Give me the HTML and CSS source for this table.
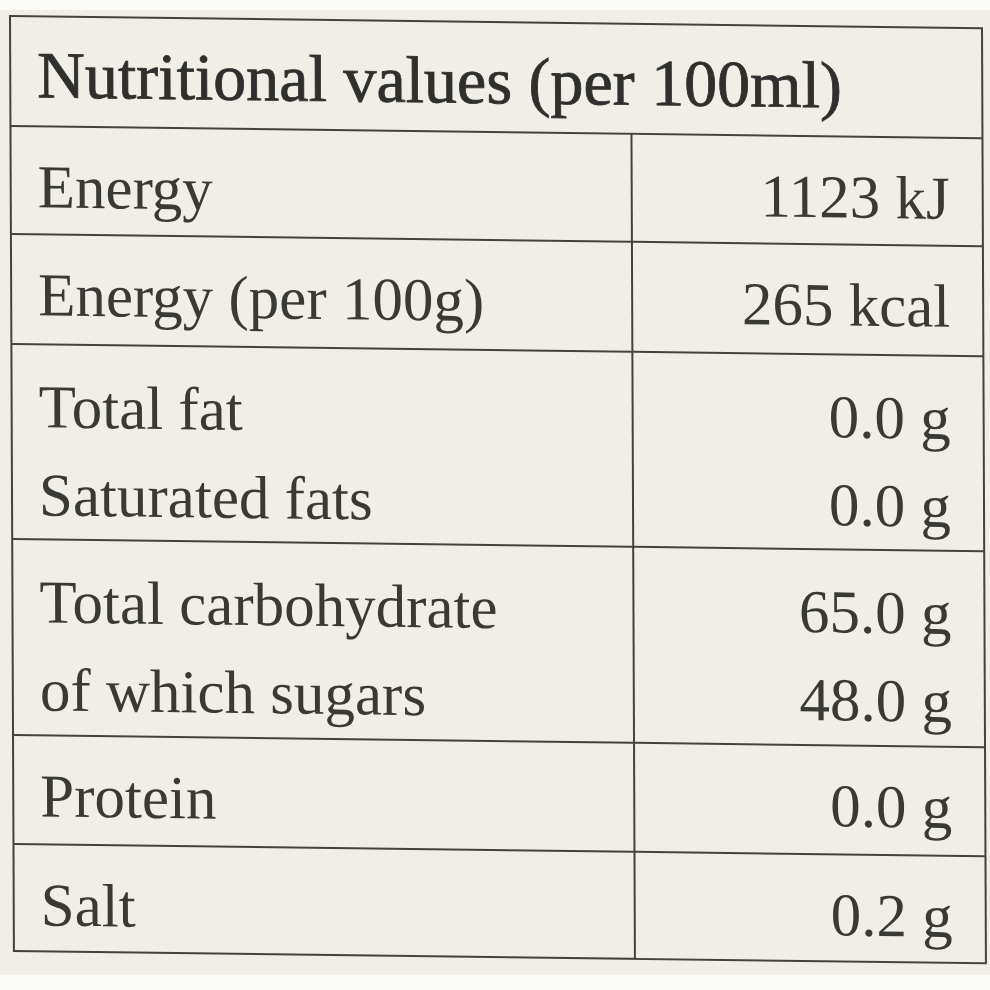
FILE: index.html
```html
<!DOCTYPE html>
<html lang="en">
<head>
<meta charset="utf-8">
<title>Nutritional values</title>
<link rel="stylesheet" href="styles.css">
</head>
<body>
<div class="paper">
  <div class="label">
    <div class="cell title">Nutritional values (per 100ml)</div>

    <div class="cell name">Energy</div>
    <div class="cell val">1123 kJ</div>

    <div class="cell name">Energy (per 100g)</div>
    <div class="cell val">265 kcal</div>

    <div class="cell name double"><div>Total fat</div><div>Saturated fats</div></div>
    <div class="cell val double"><div>0.0 g</div><div>0.0 g</div></div>

    <div class="cell name double"><div>Total carbohydrate</div><div>of which sugars</div></div>
    <div class="cell val double"><div>65.0 g</div><div>48.0 g</div></div>

    <div class="cell name">Protein</div>
    <div class="cell val">0.0 g</div>

    <div class="cell name">Salt</div>
    <div class="cell val">0.2 g</div>
  </div>
</div>
</body>
</html>
```

FILE: styles.css
```css
html, body {
  margin: 0;
  padding: 0;
  background: #fafaf7;
}

body {
  width: 990px;
  height: 990px;
  overflow: hidden;
  font-family: "Liberation Serif", "Times New Roman", serif;
}

.paper {
  margin-top: 10px;
  height: 965px;
  background: #f0eee6;
  padding: 5px 0 0 9px;
  box-sizing: border-box;
}

.label {
  width: 974px;
  box-sizing: border-box;
  padding: 2px;
  background: #42423f;
  display: grid;
  grid-template-columns: 619px 349px;
  grid-template-rows: 108px 106px 108px 193px 194px 107px 105px;
  gap: 2px;
  transform-origin: 0 0;
  transform: skewY(0.72deg) skewX(0.24deg);
}

.cell {
  background: #f0eee6;
  color: #393936;
  font-size: 61px;
  line-height: 88px;
  padding-top: 16px;
  box-sizing: border-box;
  white-space: nowrap;
}

.title {
  grid-column: 1 / 3;
  font-size: 66px;
  padding-top: 14px;
  padding-left: 26px;
  color: #2f2f2d;
  -webkit-text-stroke: 0.8px #2f2f2d;
}

.name {
  padding-left: 26px;
}

.val {
  text-align: right;
  padding-right: 32px;
}

.double {
  padding-top: 18px;
}
```
